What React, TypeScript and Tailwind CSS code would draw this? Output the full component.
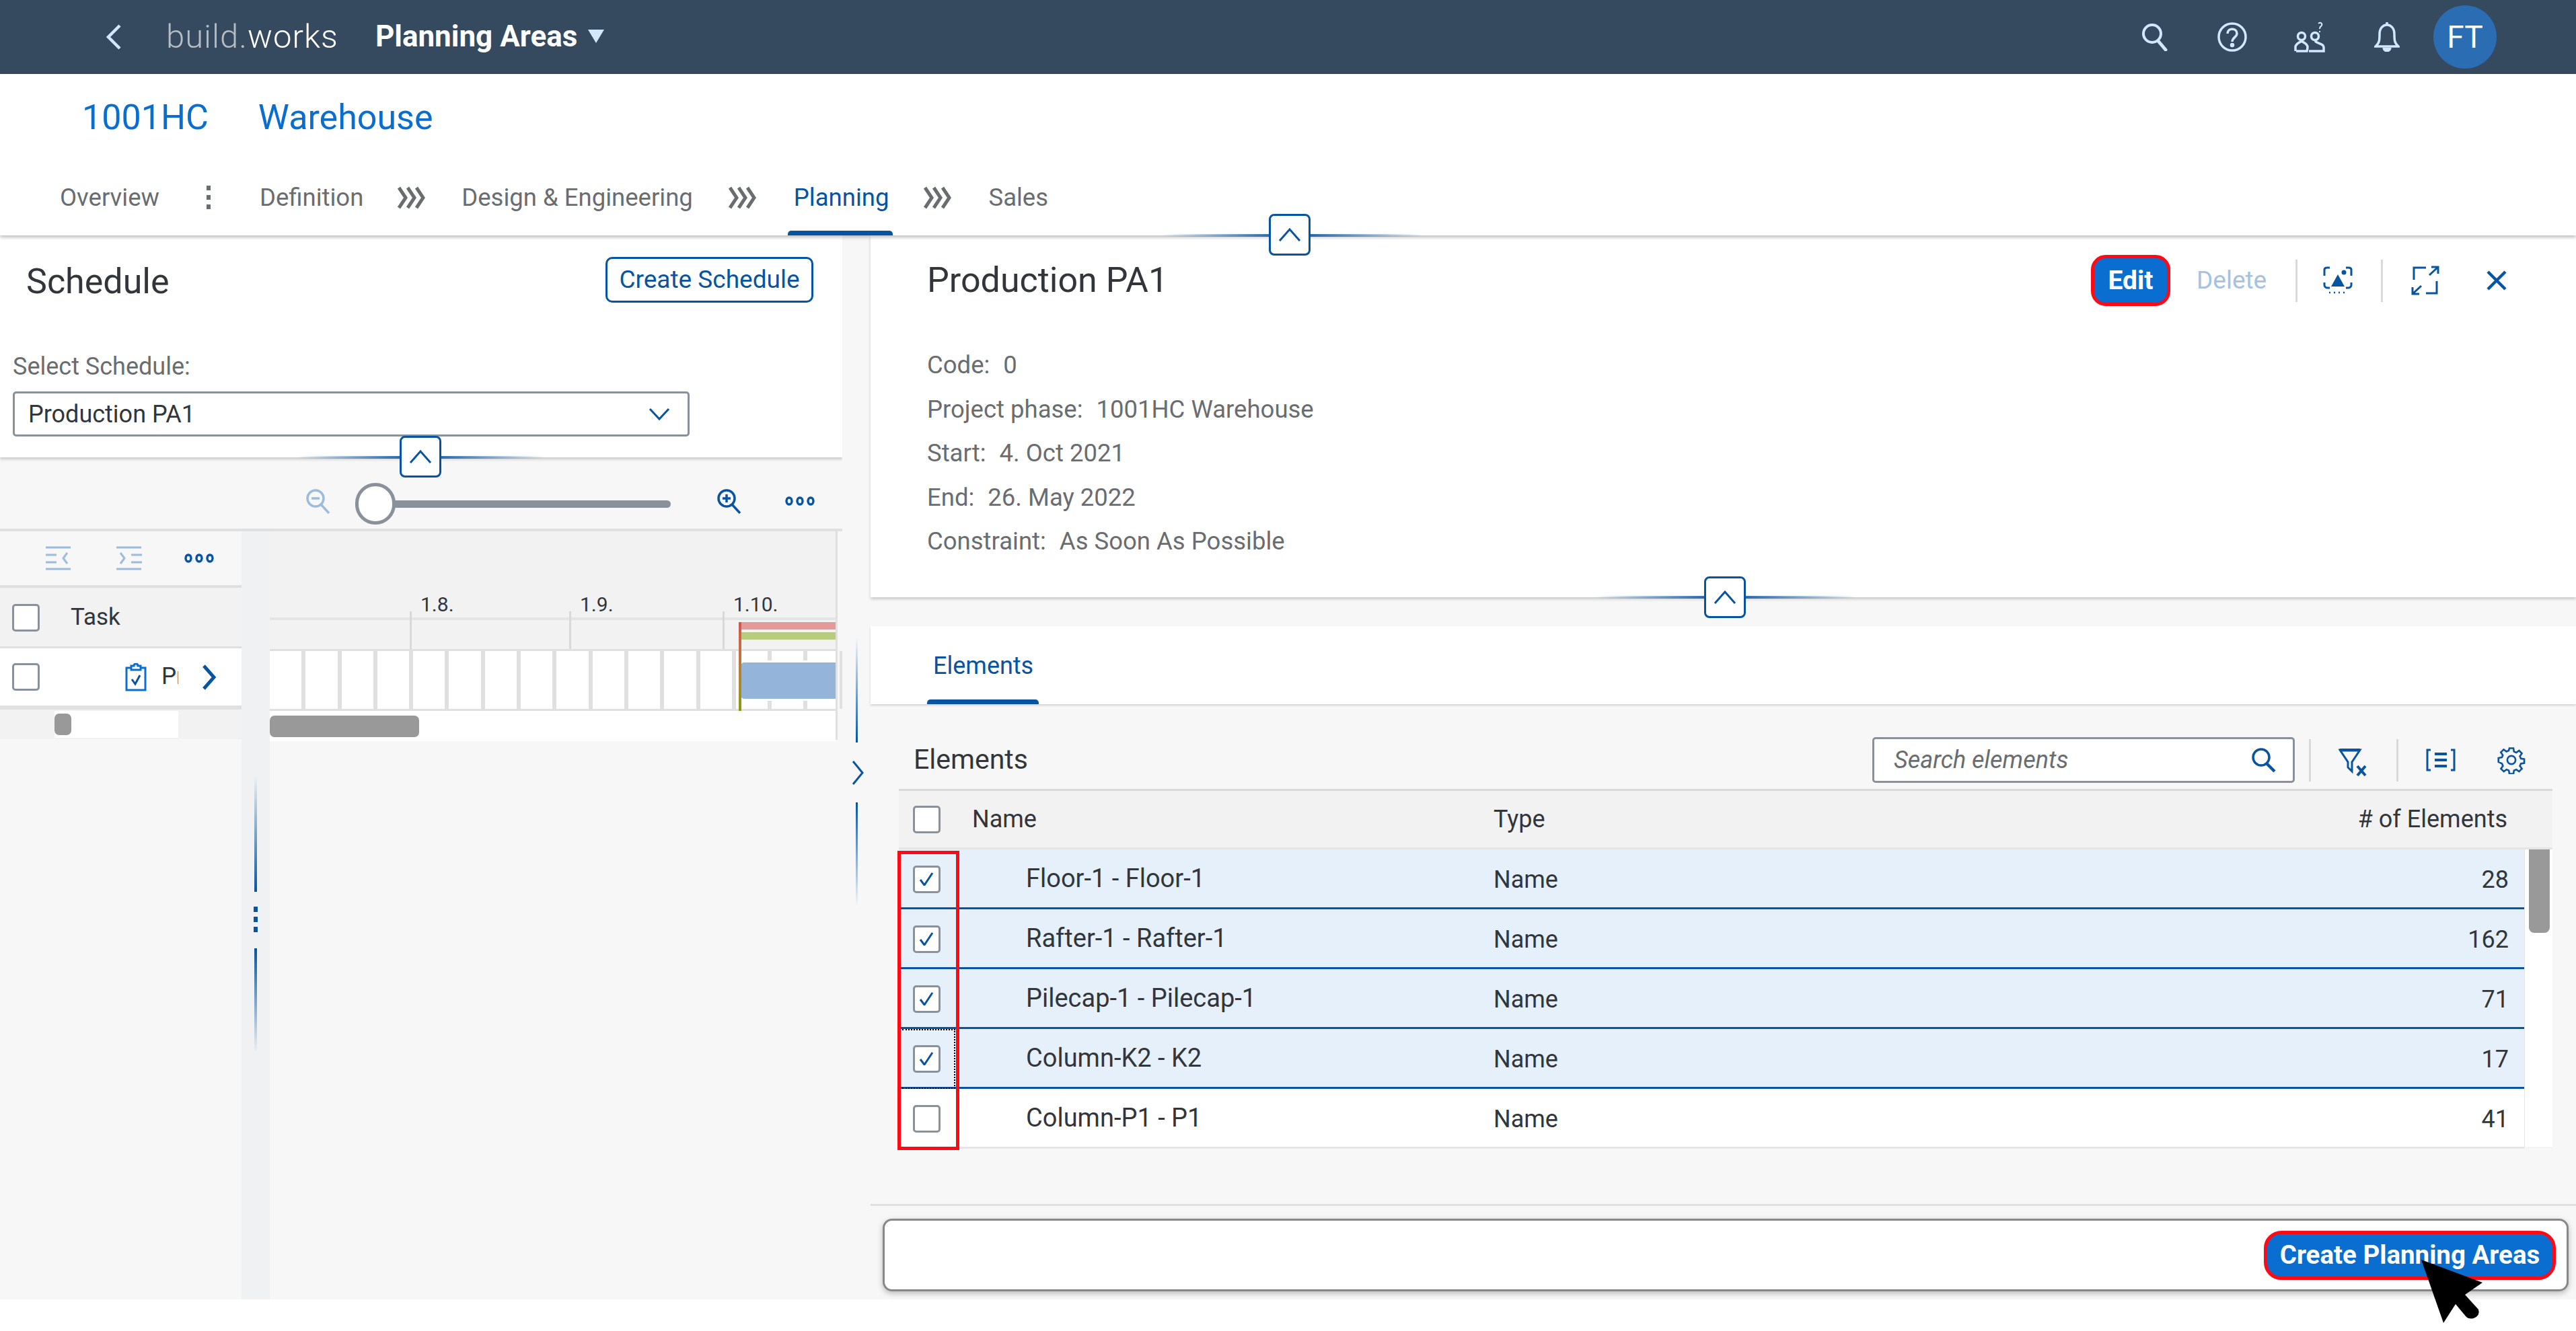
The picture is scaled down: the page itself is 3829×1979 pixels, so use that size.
import React from 'react';

const blue = '#0854a0';

const CheckBox = ({ checked = false }: { checked?: boolean }) => (
  <div className="w-[41px] h-[41px] rounded-[5px] border-[3px] border-[#89919a] bg-white flex items-center justify-center shrink-0">
    {checked && (
      <svg width="22" height="20" viewBox="0 0 22 20" fill="none">
        <path d="M2 11l6 8L20 1" stroke="#0854a0" strokeWidth="3" />
      </svg>
    )}
  </div>
);

const Dots = ({ color = blue }: { color?: string }) => (
  <svg width="44" height="14" viewBox="0 0 44 14" fill="none" stroke={color} strokeWidth="3.5">
    <ellipse cx="6" cy="7" rx="4" ry="5" />
    <ellipse cx="22" cy="7" rx="4" ry="5" />
    <ellipse cx="38" cy="7" rx="4" ry="5" />
  </svg>
);

const Chevrons = () => (
  <svg width="44" height="34" viewBox="0 0 44 34" fill="none" stroke="#6a6d70" strokeWidth="5">
    <path d="M3 2l10 15L3 32M16 2l10 15-10 15M29 2l10 15-10 15" />
  </svg>
);

const SplitButton = ({ className }: { className: string }) => (
  <div className={`absolute w-[62px] h-[62px] rounded-[8px] border-[3px] border-[#0854a0] bg-white flex items-center justify-center ${className}`}>
    <svg width="34" height="22" viewBox="0 0 34 22" fill="none" stroke="#0854a0" strokeWidth="3">
      <path d="M2 20L17 3l15 17" />
    </svg>
  </div>
);

const SplitLine = ({ className }: { className: string }) => (
  <div className={`absolute h-[4px] bg-linear-to-r from-transparent via-[#0854a0] to-transparent ${className}`} />
);

const HeaderIcons = () => (
  <div className="flex items-center ml-auto text-[#d1e8ff]">
    <div className="w-[115px] flex justify-center">
      <svg width="40" height="42" viewBox="0 0 40 42" fill="none" stroke="currentColor" strokeWidth="4">
        <circle cx="16" cy="16" r="13" />
        <path d="M25 27l11 13" strokeWidth="5" strokeLinecap="round" />
      </svg>
    </div>
    <div className="w-[115px] flex justify-center">
      <svg width="44" height="44" viewBox="0 0 44 44" fill="none" stroke="currentColor" strokeWidth="3.5">
        <circle cx="22" cy="22" r="20" />
        <path d="M15 17c0-9 14-9 14 0 0 5-7 6-7 12" />
        <circle cx="22" cy="34" r="1.5" fill="currentColor" />
      </svg>
    </div>
    <div className="w-[116px] flex justify-center">
      <svg width="46" height="46" viewBox="0 0 46 46" fill="none" stroke="currentColor" strokeWidth="3.5">
        <circle cx="11" cy="22" r="5.5" />
        <circle cx="31" cy="22" r="5.5" />
        <path d="M2 44v-6c0-5 5-6 9-9 4 3 9 4 9 9 0 2-1 6-1 6H3M22 44h22v-6c0-5-9-5-13-9" />
        <path d="M36 3c4-3 7 1 4 4-2 1-2 2-2 4M38 14v2" strokeWidth="2" />
      </svg>
    </div>
    <div className="w-[114px] flex justify-center">
      <svg width="38" height="44" viewBox="0 0 38 44" fill="none" stroke="currentColor" strokeWidth="3.5">
        <path d="M2 36c6-5 6-10 6-18C8 9 13 4 19 4s11 5 11 14c0 8 0 13 6 18z" />
        <path d="M14 38c1 6 9 6 10 0" fill="currentColor" />
        <path d="M19 0v4" />
      </svg>
    </div>
  </div>
);

const TabLabel = ({ text, active = false }: { text: string; active?: boolean }) => (
  <span className={active ? 'text-[#0854a0]' : 'text-[#6a6d70]'}>{text}</span>
);

const Info = ({ label, value }: { label: string; value: string }) => (
  <div className="h-[65.5px] flex items-center gap-[20px] text-[#6a6d70] text-[36.5px]">
    <span>{label}</span>
    <span>{value}</span>
  </div>
);

const rows = [
  { name: 'Floor-1 - Floor-1', count: '28', on: true },
  { name: 'Rafter-1 - Rafter-1', count: '162', on: true },
  { name: 'Pilecap-1 - Pilecap-1', count: '71', on: true },
  { name: 'Column-K2 - K2', count: '17', on: true },
  { name: 'Column-P1 - P1', count: '41', on: false },
];

const gridCells = Array.from({ length: 16 }, (_, i) => i);

const GanttChart = () => (
  <div className="relative w-[841px] flex flex-col">
    <div className="relative h-[175px] bg-[#f2f2f2]">
      <div className="absolute left-0 right-0 top-[128px] h-[4px] bg-[#e5e5e5]" />
      {[
        { x: 'left-[208px]', t: 'left-[224px]', label: '1.8.' },
        { x: 'left-[445px]', t: 'left-[461px]', label: '1.9.' },
        { x: 'left-[673px]', t: 'left-[689px]', label: '1.10.' },
      ].map((m) => (
        <React.Fragment key={m.label}>
          <div className={`absolute top-[119px] h-[56px] w-[3px] bg-[#d9d9d9] ${m.x}`} />
          <span className={`absolute top-[90px] leading-[38px] text-[30px] text-[#32363a] ${m.t}`}>{m.label}</span>
        </React.Fragment>
      ))}
      <div className="absolute left-[698px] right-0 top-[135px] h-[11px] bg-[#e59a9a]" />
      <div className="absolute left-[698px] right-0 top-[150px] h-[11px] bg-[#b8cb7e]" />
    </div>
    <div className="relative h-[92px] bg-white border-y-[3px] border-[#e0e0e0] flex">
      {gridCells.map((i) => (
        <div key={i} className="w-[53.3px] h-full border-r-[6px] border-[#e0e0e0] shrink-0" />
      ))}
      <div className="absolute left-[697px] right-0 top-[14px] h-[60px] rounded-l-[8px] border-l-[3px] border-y-[3px] border-white bg-[#94b5d9]" />
    </div>
    <div className="absolute left-[697px] top-[135px] h-[132px] w-[4px] bg-linear-to-b from-[#d9534f] to-[#8a9a10]" />
    <div className="h-[45px] bg-white flex items-center">
      <div className="w-[222px] h-[32px] rounded-[7px] bg-[#999999]" />
    </div>
  </div>
);

const GanttTree = () => (
  <div className="w-[359px] shrink-0 flex flex-col">
    <div className="h-[84px] flex items-center border-b-[4px] border-[#e0e0e0] pl-[68px]">
      <svg width="38" height="36" viewBox="0 0 38 36" fill="none" stroke="#9dbbdc" strokeWidth="3">
        <path d="M0 2h37M0 34h37M0 13h16M0 24h16M32 10l-6 8 6 8" />
      </svg>
      <svg className="ml-[67px]" width="38" height="36" viewBox="0 0 38 36" fill="none" stroke="#9dbbdc" strokeWidth="3">
        <path d="M0 2h37M0 34h37M22 13h16M22 24h16M6 10l6 8-6 8" />
      </svg>
      <div className="ml-[63px]">
        <Dots />
      </div>
    </div>
    <div className="h-[90px] bg-[#f2f2f2] flex items-center pl-[18px] pt-[2px] border-b-[3px] border-[#e0e0e0]">
      <CheckBox />
      <span className="ml-[46px] text-[35px] text-[#32363a]">Task</span>
    </div>
    <div className="h-[88px] bg-white flex items-center pl-[18px] border-b-[3px] border-[#e0e0e0]">
      <CheckBox />
      <svg className="ml-[127px]" width="32" height="42" viewBox="0 0 32 42" fill="none" stroke="#0a6ed1" strokeWidth="3">
        <path d="M9 7H2v33h28V7h-7M9 4h4c0-4 6-4 6 0h4v6H9z" />
        <path d="M10 24l5 7 7-13" stroke="#0854a0" />
      </svg>
      <span className="ml-[22px] w-[25px] overflow-hidden text-[35px] text-[#32363a]">Production</span>
      <svg className="ml-[35px]" width="22" height="38" viewBox="0 0 22 38" fill="none" stroke="#0854a0" strokeWidth="5">
        <path d="M3 2l15 17L3 36" />
      </svg>
    </div>
    <div className="h-[47px] bg-[#f2f2f2] flex items-center pl-[81px] border-t-[3px] border-[#e0e0e0]">
      <div className="w-[184px] h-[40px] bg-white flex items-center">
        <div className="w-[25px] h-[32px] rounded-[7px] bg-[#999999]" />
      </div>
    </div>
  </div>
);

const LeftPane = () => (
  <div className="w-[1252px] shrink-0 flex flex-col relative">
    <div className="h-[330px] bg-white px-[19px] pt-[30px] shadow-[0_3px_4px_rgba(0,0,0,0.18)] relative">
      <div className="flex items-center justify-between pl-[20px] pr-[24px]">
        <h2 className="text-[52px] text-[#32363a]">Schedule</h2>
        <button className="w-[309px] h-[68px] mb-[6px] rounded-[10px] border-[3px] border-[#0854a0] text-[37px] text-[#0854a0]">Create Schedule</button>
      </div>
      <div className="mt-[67px] h-[40px] leading-[40px] text-[36px] text-[#6a6d70]">Select Schedule:</div>
      <div className="mt-[17px] w-[1006px] h-[67px] rounded-[5px] border-[3px] border-[#89919a] flex items-center px-[20px] text-[36px] text-[#32363a]">
        Production PA1
        <svg className="ml-auto mr-[6px]" width="32" height="20" viewBox="0 0 32 20" fill="none" stroke="#0854a0" strokeWidth="3">
          <path d="M2 2l14 15L30 2" />
        </svg>
      </div>
    </div>
    <SplitLine className="left-[440px] w-[370px] top-[328px]" />
    <SplitButton className="left-[594px] top-[298px]" />

    <div className="h-[110px] flex items-center justify-end border-b-[4px] border-[#e0e0e0] pr-[41px] pt-[32px]">
      <svg className="mb-[8px]" width="38" height="38" viewBox="0 0 38 38" fill="none" stroke="#9dbbdc" strokeWidth="3.5">
        <circle cx="15" cy="15" r="12" />
        <path d="M9 15h12M23 24l12 13" />
      </svg>
      <div className="ml-[36px] mr-[68px] w-[469px] relative flex items-center">
        <div className="w-full h-[11px] rounded-[6px] bg-[#89919a]" />
        <div className="absolute left-0 w-[60px] h-[62px] rounded-full bg-white border-[5px] border-[#89919a]" />
      </div>
      <svg className="mb-[8px]" width="38" height="38" viewBox="0 0 38 38" fill="none" stroke="#0854a0" strokeWidth="3.5">
        <circle cx="15" cy="15" r="12" />
        <path d="M9 15h12M15 9v12M23 24l12 13" />
      </svg>
      <div className="ml-[64px] mb-[8px]">
        <Dots />
      </div>
    </div>

    <div className="flex flex-1 bg-[#f7f7f7] relative">
      <GanttTree />
      <div className="w-[42px] shrink-0 bg-[#eff1f2]" />
      <div className="flex flex-col">
        <GanttChart />
      </div>
      <div className="w-[3px] h-[310px] bg-[#e0e0e0]" />
      <div className="absolute left-[378px] top-[364px] w-[4px] h-[172px] bg-linear-to-b from-transparent to-[#0854a0]" />
      <div className="absolute left-[377px] top-[558px] flex flex-col gap-[7px]">
        <div className="w-[6px] h-[8px] bg-[#0854a0]" />
        <div className="w-[6px] h-[8px] bg-[#0854a0]" />
        <div className="w-[6px] h-[8px] bg-[#0854a0]" />
      </div>
      <div className="absolute left-[378px] top-[620px] w-[4px] h-[155px] bg-linear-to-b from-[#0854a0] to-transparent" />
    </div>
  </div>
);

const Gutter = () => (
  <div className="w-[42px] shrink-0 relative bg-[#f7f7f7]">
    <div className="absolute left-[20px] top-[598px] w-[3px] h-[156px] bg-linear-to-b from-transparent to-[#0854a0]" />
    <svg className="absolute left-[13px] top-[780px]" width="20" height="38" viewBox="0 0 20 38" fill="none" stroke="#0854a0" strokeWidth="3">
      <path d="M3 2l14 17L3 36" />
    </svg>
    <div className="absolute left-[20px] top-[843px] w-[3px] h-[154px] bg-linear-to-b from-[#0854a0] to-transparent" />
  </div>
);

const DetailHead = () => (
  <div className="h-[538px] bg-white shadow-[0_3px_4px_rgba(0,0,0,0.18)] relative pl-[84px] pt-[34px]">
    <div className="flex items-center h-[66px] pr-[103px]">
      <h2 className="text-[52px] text-[#32363a]">Production PA1</h2>
      <div className="ml-auto flex items-center">
        <button className="w-[118px] h-[76px] rounded-[22px] border-[5px] border-[#ff0a14] bg-[#0a6ed1] text-white font-bold text-[39px]">Edit</button>
        <span className="ml-[39px] w-[108px] text-[37px] text-[#a6c2e0]">Delete</span>
        <div className="ml-[39px] w-[3px] h-[63px] bg-[#d9d9d9]" />
        <svg className="ml-[38px]" width="44" height="42" viewBox="0 0 44 42" fill="none" stroke="#0854a0" strokeWidth="3">
          <path d="M2 14V5c0-2 2-3 4-3h4M34 2h4c2 0 4 1 4 3v9M2 24v4c0 2 2 4 4 4h4M34 32h4c2 0 4-2 4-4v-4" />
          <path d="M22 12l10 18H12z" fill="#0854a0" stroke="none" />
          <circle cx="31" cy="9" r="3.5" fill="#0854a0" stroke="none" />
          <path d="M9 39h26" strokeDasharray="2 5" strokeWidth="2.5" />
        </svg>
        <div className="ml-[42px] w-[3px] h-[63px] bg-[#d9d9d9]" />
        <svg className="ml-[42px]" width="42" height="44" viewBox="0 0 42 44" fill="none" stroke="#0854a0" strokeWidth="3">
          <path d="M22 3H4v18M38 23v18H22M27 14L40 2M30 2h10v10M15 30L2 42M12 42H2V32" />
        </svg>
        <svg className="ml-[70px]" width="30" height="30" viewBox="0 0 30 30" fill="none" stroke="#0854a0" strokeWidth="4.5">
          <path d="M2 2l26 26M28 2L2 28" />
        </svg>
      </div>
    </div>
    <div className="mt-[61px]">
      <Info label="Code:" value="0" />
      <Info label="Project phase:" value="1001HC Warehouse" />
      <Info label="Start:" value="4. Oct 2021" />
      <Info label="End:" value="26. May 2022" />
      <Info label="Constraint:" value="As Soon As Possible" />
    </div>
  </div>
);

const ElementsTable = () => (
  <div className="relative mx-[42px] w-[2458px]">
    <div className="h-[90px] bg-[#f2f2f2] border-y-[3px] border-t-[#d9d9d9] border-b-[#e5e5e5] flex items-center text-[36px] text-[#32363a]">
      <div className="w-[88px] flex justify-center pr-[6px]">
        <CheckBox />
      </div>
      <span className="w-[796px] pl-[21px]">Name</span>
      <span>Type</span>
      <span className="ml-auto pr-[67px]"># of Elements</span>
    </div>
    <div className="flex">
      <div className="w-[2416px]">
        {rows.map((r) => (
          <div
            key={r.name}
            className={`h-[89px] flex items-center pt-[4px] text-[36px] text-[#32363a] border-b-[3px] ${r.on ? 'bg-[#e5f0fa] border-[#0854a0]' : 'bg-white border-[#e5e5e5]'}`}
          >
            <div className="w-[88px] flex justify-center pr-[6px] pb-[2px]">
              <CheckBox checked={r.on} />
            </div>
            <span className="w-[796px] pl-[101px] pb-[4px] text-[38px]">{r.name}</span>
            <span>Name</span>
            <span className="ml-auto pr-[23px]">{r.count}</span>
          </div>
        ))}
      </div>
      <div className="flex-1 bg-white pl-[6px] pr-[4px] border-l-[1px] border-[#e5e5e5] border-b-[3px] border-b-[#f5f5f5]">
        <div className="h-[124px] rounded-b-[8px] bg-[#999999]" />
      </div>
    </div>
    <div className="absolute left-[5px] top-[357px] w-[79px] h-[89px] border-y-[2px] border-r-[2px] border-dotted border-black" />
    <div className="absolute left-[-2px] top-[92px] w-[92px] h-[445px] border-[5px] border-[#ff0a14]" />
  </div>
);

const ElementsPane = () => (
  <div className="flex-1 flex flex-col bg-[#f7f7f7] relative">
    <div className="h-[126px] flex items-center pl-[64px] pt-[40px]">
      <span className="text-[41px] text-[#32363a]">Elements</span>
      <div className="ml-auto flex items-center pr-[75px]">
        <div className="w-[628px] h-[68px] rounded-[5px] border-[3px] border-[#89919a] bg-white flex items-center pl-[29px] pr-[24px]">
          <span className="italic text-[36px] text-[#6a6d70]">Search elements</span>
          <svg className="ml-auto" width="38" height="38" viewBox="0 0 38 38" fill="none" stroke="#0854a0" strokeWidth="3.5">
            <circle cx="15" cy="15" r="12" />
            <path d="M23 24l12 12" strokeWidth="4.5" />
          </svg>
        </div>
        <div className="ml-[21px] w-[3px] h-[63px] bg-[#d9d9d9]" />
        <svg className="ml-[41px] mt-[8px]" width="44" height="42" viewBox="0 0 44 42" fill="none" stroke="#0854a0" strokeWidth="3">
          <path d="M2 2h30L20 20v14l-6 -6V20z" />
          <path d="M2 2h30" strokeWidth="5" />
          <path d="M28 26l12 14M40 26L28 40" strokeWidth="4" />
        </svg>
        <div className="ml-[42px] w-[3px] h-[63px] bg-[#d9d9d9]" />
        <svg className="ml-[41px]" width="44" height="34" viewBox="0 0 44 34" fill="none" stroke="#0854a0" strokeWidth="3">
          <path d="M7 2H2v30h5M37 2h5v30h-5" />
          <path d="M13 8h18M13 17h18M13 26h18" strokeWidth="4" />
        </svg>
        <svg className="ml-[62px]" width="42" height="42" viewBox="0 0 24 24" fill="none" stroke="#0854a0" strokeWidth="1.5">
          <path d="M10.3 2h3.4l.5 2.9 1.9.8 2.4-1.7 2.4 2.4-1.7 2.4.8 1.9 2.9.5v3.4l-2.9.5-.8 1.9 1.7 2.4-2.4 2.4-2.4-1.7-1.9.8-.5 2.9h-3.4l-.5-2.9-1.9-.8-2.4 1.7-2.4-2.4 1.7-2.4-.8-1.9L1 13.7v-3.4l2.9-.5.8-1.9L3 5.5 5.4 3.1l2.4 1.7 1.9-.8z" />
          <circle cx="12" cy="12" r="3.5" />
        </svg>
      </div>
    </div>
    <ElementsTable />
    <div className="mt-[82px] border-t-[3px] border-[#e0e0e0] pt-[19px] pl-[18px] pr-[11px]">
      <div className="h-[108px] rounded-[14px] border-[3px] border-[#888888] bg-white shadow-[0_3px_8px_rgba(0,0,0,0.25)] flex items-center justify-end pr-[16px]">
        <button className="w-[434px] h-[73px] rounded-[26px] border-[5px] border-[#ff0a14] bg-[#0a6ed1] text-white font-bold text-[38.5px] whitespace-nowrap">Create Planning Areas</button>
      </div>
    </div>
  </div>
);

export default function App() {
  return (
    <div className="relative w-[3829px] h-[1979px] overflow-hidden bg-white [font-family:Roboto,sans-serif]">
      <header className="h-[110px] bg-[#354a5f] flex items-center pl-[155px] pr-[118px]">
        <svg width="28" height="38" viewBox="0 0 28 38" fill="none" stroke="#d1e8ff" strokeWidth="4.5">
          <path d="M23 2L6 19l17 17" />
        </svg>
        <div className="ml-[64px] text-[49px] font-light text-white tracking-[1px]">
          <span className="text-[#b4bcc4]">build.</span>works
        </div>
        <div className="ml-[55px] mb-[3px] flex items-center text-[44px] font-bold text-white">
          Planning Areas
          <svg className="ml-[16px]" width="24" height="20" viewBox="0 0 24 20" fill="#d1e8ff">
            <path d="M0 0h24L12 20z" />
          </svg>
        </div>
        <HeaderIcons />
        <div className="ml-[12px] w-[94px] h-[94px] rounded-full bg-[#2a6db3] flex items-center justify-center text-[46px] text-white">FT</div>
      </header>

      <div className="h-[240px] flex flex-col shadow-[0_3px_5px_rgba(0,0,0,0.25)] relative z-10 bg-white">
        <div className="h-[130px] flex items-center pl-[122px] gap-[74px] text-[52px] text-[#0a6ed1]">
          <span>1001HC</span>
          <span>Warehouse</span>
        </div>
        <nav className="flex items-center h-[110px] pb-[2px] pl-[89px] text-[36.5px]">
          <TabLabel text="Overview" />
          <svg className="ml-[70px] mr-[73px]" width="6" height="36" viewBox="0 0 6 36" fill="#6a6d70">
            <rect y="0" width="6" height="7" />
            <rect y="14" width="6" height="7" />
            <rect y="28" width="6" height="7" />
          </svg>
          <TabLabel text="Definition" />
          <div className="ml-[50px] mr-[52px]"><Chevrons /></div>
          <TabLabel text="Design & Engineering" />
          <div className="ml-[52px] mr-[54px]"><Chevrons /></div>
          <TabLabel text="Planning" active />
          <div className="ml-[51px] mr-[53px]"><Chevrons /></div>
          <TabLabel text="Sales" />
        </nav>
        <div className="absolute left-[1171px] bottom-0 w-[156px] h-[7px] rounded-t-[5px] bg-[#0854a0]" />
      </div>

      <main className="flex h-[1582px] bg-[#f7f7f7]">
        <LeftPane />
        <Gutter />
        <div className="flex-1 min-w-0 flex flex-col relative">
          <DetailHead />
          <div className="h-[43px]" />
          <div className="h-[116px] bg-white shadow-[0_2px_3px_rgba(0,0,0,0.15)] relative z-[1] pl-[93px] pt-[32px]">
            <span className="text-[36px] text-[#0854a0]">Elements</span>
            <div className="absolute left-[84px] bottom-0 w-[166px] h-[7px] rounded-t-[5px] bg-[#0854a0]" />
          </div>
          <ElementsPane />
          <SplitLine className="left-[1076px] w-[390px] top-[536px]" />
          <SplitButton className="left-[1239px] top-[507px]" />
        </div>
      </main>

      <div className="absolute z-20 left-[1726px] w-[389px] top-[348px] h-[4px] bg-linear-to-r from-transparent via-[#0854a0] to-transparent" />
      <SplitButton className="z-20 left-[1886px] top-[318px]" />

      <svg className="absolute z-30 left-[3590px] top-[1865px]" width="110" height="110" viewBox="3590 1865 110 110" fill="#000">
        <path d="M3599 1873L3690 1907L3664 1925L3684 1947Q3687 1956 3677 1960Q3669 1962 3665 1957L3650 1939L3632 1967Z" />
      </svg>
    </div>
  );
}
